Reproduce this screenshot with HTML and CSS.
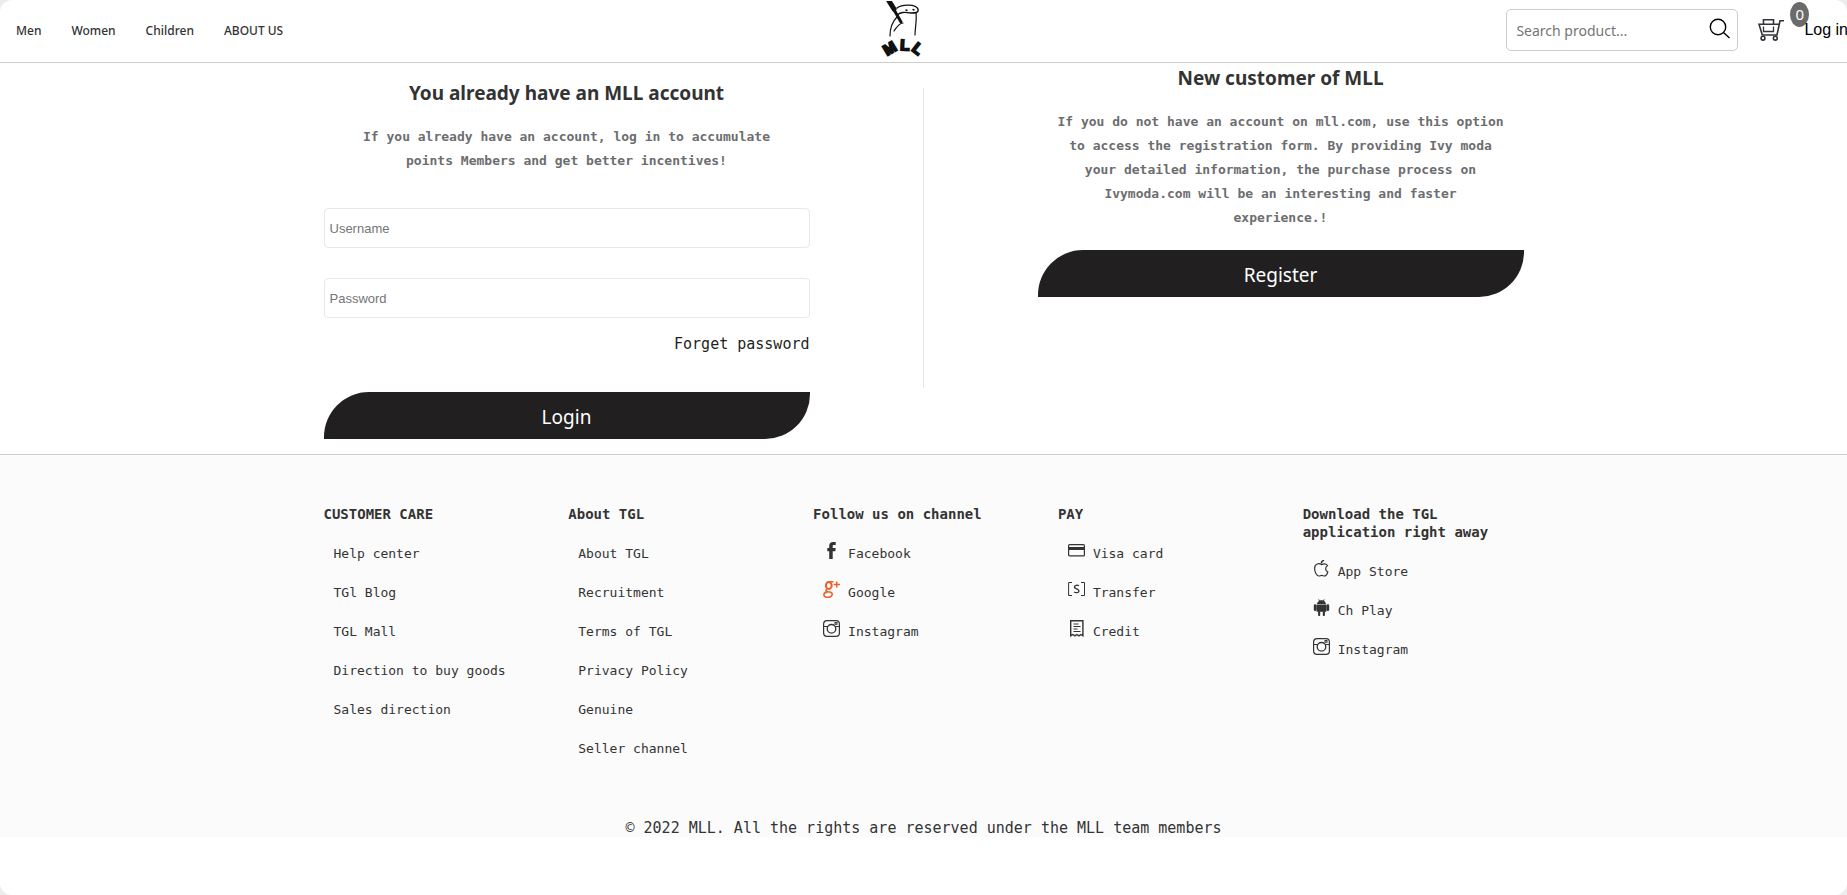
FILE: index.html
```html
<!DOCTYPE html>
<html lang="en">
<head>
<meta charset="utf-8">
<meta name="viewport" content="width=device-width, initial-scale=1">
<title>MLL - Login</title>
<link rel="stylesheet" href="styles.css">
</head>
<body>
<svg class="sprite" aria-hidden="true">
  <symbol id="instagram" viewBox="0 0 17 17">
    <g fill="none" stroke="currentColor">
      <rect x="0.6" y="0.6" width="15.8" height="15.8" rx="3.4" stroke-width="1.2"/>
      <circle cx="8.500" cy="8.800" r="4.300" stroke-width="1.300"/>
      <path d="M0.600 6.500h4M12.400 6.500h4" stroke-width="1"/>
      <rect x="12" y="2.500" width="2" height="1.800" stroke-width="1"/>
    </g>
  </symbol>
</svg>

<header class="header">
  <nav class="nav">
    <a href="#">Men</a>
    <a href="#">Women</a>
    <a href="#">Children</a>
    <a href="#">ABOUT US</a>
  </nav>
  <a class="logo" href="#" aria-label="MLL home">
    <svg width="48" height="60" viewBox="0 0 48 60">
      <g fill="none" stroke="#111" stroke-linecap="round">
        <path d="M9 0l5 8" stroke-width="5"/>
        <path d="M13 7l8 14" stroke-width="3"/>
        <path d="M10 35c0-8 3-15 7-19M14 30c3-4 5-8 9-8" stroke-width="1.200"/>
        <path d="M17 7c5-4 19-4 21 1 1 4-3 4-7 4-7-1-10-1-14 2" stroke-width="1.400"/>
        <path d="M36 12c1 7-1 15-1 22" stroke-width="1.200"/>
        <path d="M26 9l1 .5M33 8.500l1 .5" stroke-width="1.400"/>
      </g>
      <g class="logo-text">
        <text transform="translate(7 55) rotate(-31)">M</text>
        <text transform="translate(20 49) rotate(3)">L</text>
        <text transform="translate(31 49) rotate(38)">L</text>
      </g>
    </svg>
  </a>
  <div class="tools">
    <form class="search" role="search">
      <input type="search" placeholder="Search product..." aria-label="Search product">
      <button type="submit" aria-label="Search">
        <svg width="22" height="22" viewBox="0 0 22 22" fill="none" stroke="#000" stroke-width="1.400"><circle cx="10" cy="9" r="7.700"/><path d="M15.500 14.500l6 5.500"/></svg>
      </button>
    </form>
    <a class="cart" href="#" aria-label="Cart, 0 items">
      <svg width="26" height="24" viewBox="0 0 26 24" fill="none" stroke="#333338" stroke-width="1.600">
        <path d="M26 2.800h-4l-3 14.200H4.300L1 6.200h20"/>
        <path d="M5.500 6V1.800h10V6"/>
        <path d="M5.500 8.500v5h10v-5" stroke-width="1.300"/>
        <circle cx="5" cy="20.200" r="1.900"/><circle cx="17.300" cy="20.200" r="1.900"/>
      </svg>
      <span class="badge">0</span>
    </a>
    <a class="login-link" href="#">Log in</a>
  </div>
</header>

<main class="account">
  <section class="panel panel-login">
    <h1 class="title">You already have an MLL account</h1>
    <p class="intro">If you already have an account, log in to accumulate points Members and get better incentives!</p>
    <form class="login-form">
      <input class="field" type="text" placeholder="Username" aria-label="Username">
      <input class="field" type="password" placeholder="Password" aria-label="Password">
      <a class="forgot" href="#">Forget password</a>
      <button class="button" type="submit">Login</button>
    </form>
  </section>
  <div class="divider"></div>
  <section class="panel">
    <h2 class="title">New customer of MLL</h2>
    <p class="intro">If you do not have an account on mll.com, use this option to access the registration form. By providing Ivy moda your detailed information, the purchase process on Ivymoda.com will be an interesting and faster experience.!</p>
    <button class="button" type="button">Register</button>
  </section>
</main>

<footer class="footer">
  <div class="columns">
    <section>
      <h3>CUSTOMER CARE</h3>
      <ul>
        <li><a href="#">Help center</a></li>
        <li><a href="#">TGl Blog</a></li>
        <li><a href="#">TGL Mall</a></li>
        <li><a href="#">Direction to buy goods</a></li>
        <li><a href="#">Sales direction</a></li>
      </ul>
    </section>
    <section>
      <h3>About TGL</h3>
      <ul>
        <li><a href="#">About TGL</a></li>
        <li><a href="#">Recruitment</a></li>
        <li><a href="#">Terms of TGL</a></li>
        <li><a href="#">Privacy Policy</a></li>
        <li><a href="#">Genuine</a></li>
        <li><a href="#">Seller channel</a></li>
      </ul>
    </section>
    <section>
      <h3>Follow us on channel</h3>
      <ul>
        <li><a href="#"><svg class="icon" viewBox="0 0 17 17"><path fill="currentColor" d="M6.200 17V9.200H4.300V6h1.900V4c0-2.700 1.400-4 3.900-4h2.600v3.100h-1.700c-1 0-1.300.4-1.300 1.200V6h3l-.4 3.200H9.700V17z"/></svg>Facebook</a></li>
        <li><a href="#"><svg class="icon google" viewBox="0 0 17 17" fill="none" stroke="currentColor"><ellipse cx="5.800" cy="4.500" rx="2.900" ry="3.500" stroke-width="2"/><path d="M5.800 0.700h4.700M4 8c-1.800 1.500-1 2.500 1 2.800 2.500.3 4.500.6 4.200 2.600-.3 2.200-2.200 2.900-4.400 2.900-2.400 0-4-.8-3.900-2.600.1-1.600 1.600-2.400 3.500-2.600" stroke-width="1.600"/><path d="M13.700 0.500v6M10.700 3.500h6.300" stroke-width="1.500"/></svg>Google</a></li>
        <li><a href="#"><svg class="icon"><use href="#instagram"/></svg>Instagram</a></li>
      </ul>
    </section>
    <section>
      <h3>PAY</h3>
      <ul>
        <li><a href="#"><svg class="icon" viewBox="0 0 17 17"><rect x="0.600" y="2.600" width="15.800" height="11.300" rx="1" fill="none" stroke="currentColor" stroke-width="1.200"/><path d="M0.600 5h15.800v3H0.600z" fill="currentColor"/></svg>Visa card</a></li>
        <li><a href="#"><svg class="icon" viewBox="0 0 17 17" fill="none" stroke="currentColor"><path d="M4 1.500H0.600v13H4M13 1.500h3.500v13H13" stroke-width="1"/><path d="M11 4.800c-1.500-1-4.600-.8-4.600 1.200 0 2.200 4.600 1.500 4.600 3.900 0 2-3.200 2.300-5 1.100" stroke-width="1.300"/></svg>Transfer</a></li>
        <li><a href="#"><svg class="icon" viewBox="0 0 17 17" fill="none" stroke="currentColor"><path d="M2.700 15.800V0.700h12.200v15.100l-2-1.300-2 1.300-2-1.300-2 1.300-2-1.300z" stroke-width="1.400"/><path d="M5.500 4h5M5.500 6.500h7M5.500 9h4M5.500 11.500h7" stroke-width="1.100"/></svg>Credit</a></li>
      </ul>
    </section>
    <section>
      <h3>Download the TGL application right away</h3>
      <ul>
        <li><a href="#"><svg class="icon" viewBox="0 0 17 17" fill="none" stroke="currentColor" stroke-width="1.200"><path d="M8.500 4.600C6.500 3.200 1.600 3 1.600 8.500c0 4 2.300 7.500 4.400 7.500 1.200 0 1.500-.6 2.700-.6s1.600.6 2.700.6c1.400 0 2.800-2 3.400-4-2.800-1.400-2.800-4.900-.3-6.500-1.500-2.100-4.100-1.900-6-.9z"/><path d="M8.300 3.500c0-1.800 1-2.800 2.800-3.200" stroke-width="1.500"/></svg>App Store</a></li>
        <li><a href="#"><svg class="icon" viewBox="0 0 17 17"><path fill="currentColor" d="M4 5C4.200 3.500 5 2.500 6 1.900L5.300.6l.7-.4.800 1.400c1-.4 2.400-.4 3.400 0L11 .2l.7.4-.7 1.300c1 .6 1.800 1.600 2 3.100zM3.600 5.500h9.800v7.300h-1.500V16a1 1 0 0 1-2.100 0v-3.200H7.200V16a1 1 0 0 1-2.100 0v-3.200H3.600zM.8 6.600a1.300 1.300 0 0 1 2.600 0v4.200a1.300 1.300 0 0 1-2.600 0zM13.600 6.600a1.300 1.300 0 0 1 2.600 0v4.200a1.300 1.300 0 0 1-2.600 0z"/></svg>Ch Play</a></li>
        <li><a href="#"><svg class="icon"><use href="#instagram"/></svg>Instagram</a></li>
      </ul>
    </section>
  </div>
  <p class="copyright">© 2022 MLL. All the rights are reserved under the MLL team members</p>
</footer>
</body>
</html>
```

FILE: styles.css
```css
* { box-sizing: border-box; }

html { background: #ececec; }

body {
  min-height: 100vh;
  margin: 0;
  overflow: hidden;
  border-radius: 12px;
  background: #fff;
  color: #333;
  font-family: "DejaVu Sans Mono", monospace;
}

a { color: inherit; text-decoration: none; }
h1, h2, h3, p, ul { margin: 0; padding: 0; }
ul { list-style: none; }
.sprite { display: none; }

.header {
  display: grid;
  grid-template-columns: 1fr auto 1fr;
  align-items: center;
  height: 63px;
  border-bottom: 1px solid #ccc;
}

.nav {
  display: flex;
  gap: 30px;
  padding-left: 16px;
  font: 500 12px/18px "Noto Sans", sans-serif;
}

.logo {
  display: block;
  height: 60px;
  padding-right: 40px;
}

.logo svg { display: block; }

.logo-text {
  font: bold 15px "Liberation Sans", sans-serif;
  fill: #111;
  stroke: #111;
  stroke-width: 2px;
}

.tools {
  display: flex;
  justify-content: flex-end;
  align-items: center;
  padding-bottom: 2px;
}

.search {
  display: flex;
  align-items: center;
  width: 232px;
  height: 42px;
  padding: 0 7px 0 9px;
  border: 1px solid #ccc;
  border-radius: 5px;
}

.search input {
  flex: 1;
  min-width: 0;
  padding: 2px 0 0;
  border: 0;
  outline: 0;
  background: none;
  font: 14px/20px "Noto Sans", sans-serif;
}

.search button {
  height: 30px;
  padding: 0;
  border: 0;
  background: none;
}

::placeholder { color: #757575; opacity: 1; }

.cart { position: relative; margin: 0 20px; }
.cart svg { display: block; }

.badge {
  position: absolute;
  top: -16px;
  right: -25px;
  width: 19px;
  height: 25px;
  border-radius: 50%;
  background: #6b6b6b;
  color: #fff;
  font: 15px/25px "Noto Sans", sans-serif;
  text-align: center;
}

.login-link {
  position: relative;
  margin-right: -1px;
  color: #000;
  font: 16px/18px "Liberation Sans", sans-serif;
  white-space: nowrap;
}

.account {
  display: grid;
  grid-template-columns: 486px 1px 486px;
  justify-content: space-between;
  max-width: 1200px;
  margin: 0 auto;
  padding-bottom: 15px;
}

.panel { text-align: center; }
.panel-login { padding-top: 15px; }

.divider {
  height: 300px;
  margin-top: 25px;
  background: #e6e6e6;
}

.title {
  font: bold 19px/30px "Noto Sans", sans-serif;
}

.intro {
  margin: 17px 18px 20px;
  color: #6c6d70;
  font-size: 13px;
  font-weight: bold;
  line-height: 24px;
}

.login-form {
  display: flex;
  flex-direction: column;
  gap: 30px;
  padding-top: 15px;
}

.field {
  height: 40px;
  padding: 0 5px;
  border: 1px solid #e7e8e9;
  border-radius: 4px;
  font: 13px "Liberation Sans", sans-serif;
}

.forgot {
  align-self: flex-end;
  margin: -13px 0 9px;
  color: #221f20;
  font-size: 15px;
  line-height: 18px;
}

.button {
  width: 100%;
  height: 47px;
  padding: 2px 0 0;
  border: 0;
  border-radius: 45px 0;
  background: #221f20;
  color: #fff;
  font: 19px/28px "Noto Sans", sans-serif;
}

.footer {
  padding-top: 50px;
  border-top: 1px solid #ccc;
  background: #fbfbfb;
}

.columns {
  display: grid;
  grid-template-columns: repeat(5, 1fr);
  gap: 24px;
  max-width: 1200px;
  margin: 0 auto;
}

.columns h3 { font-size: 14px; line-height: 18px; }
.columns ul { padding-top: 1px; }

.columns li {
  padding: 21px 0 0 10px;
  font-size: 13px;
  line-height: 18px;
}

.columns a { display: flex; }

.icon {
  width: 17px;
  height: 17px;
  margin: -3px 8px 0 0;
}

.google { color: #eb5f2b; }

.copyright {
  padding-top: 61px;
  font-size: 15px;
  line-height: 18px;
  text-align: center;
}
```
